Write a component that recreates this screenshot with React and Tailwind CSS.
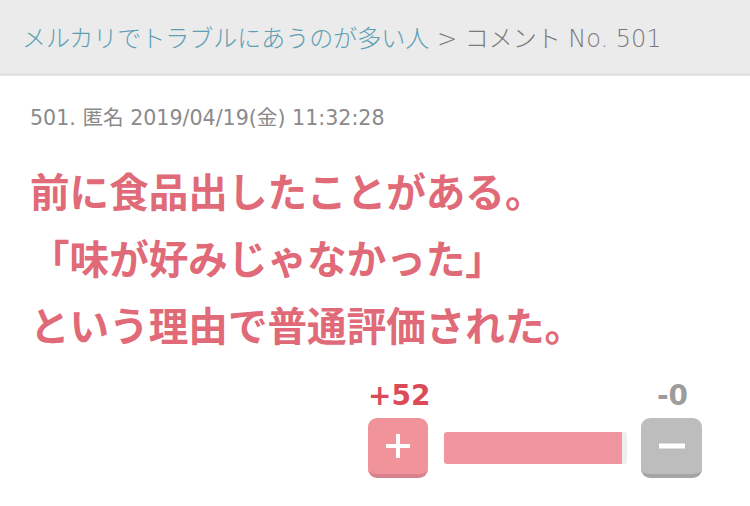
export default function App() {
  const jp = { fontFamily: '"Noto Sans CJK JP", "Noto Sans", sans-serif' };
  return (
    <div className="w-[750px] h-[506px] bg-white overflow-hidden" style={jp}>
      <div className="h-[76px] bg-[#ebebeb] border-b-[3px] border-[#e2e2e2] flex items-center pl-[22px] pt-[2px]">
        <div className="text-[24px] font-light whitespace-nowrap" style={{ fontFamily: '"Noto Sans CJK JP", sans-serif' }}>
          <span className="text-[#5e9fb3]">メルカリでトラブルにあうのが多い人</span>
          <span className="text-[#7a7a7a] font-extralight" style={{ fontFamily: '"DejaVu Sans", "Noto Sans CJK JP", sans-serif' }}> &gt; コメント No. 501</span>
        </div>
      </div>
      <div className="pl-[30px] pt-[30px]">
        <div className="text-[20.6px] leading-[24px] text-[#8a8a8a] whitespace-nowrap" style={{ fontFamily: '"DejaVu Sans", "Noto Sans CJK JP", sans-serif' }}>
          501. 匿名 2019/04/19(金) 11:32:28
        </div>
        <div className="mt-[26px] text-[39.6px] leading-[67px] font-bold text-[#e06a77] whitespace-nowrap">
          <div>前に食品出したことがある。</div>
          <div>「味が好みじゃなかった」</div>
          <div>という理由で普通評価された。</div>
        </div>
      </div>
      <div className="flex justify-end pr-[48px] mt-[21px]">
        <div className="flex flex-col w-[334px]">
          <div className="flex justify-between h-[30px] items-end text-[28px] font-bold leading-none" style={{ fontFamily: '"DejaVu Sans", sans-serif' }}>
            <span className="text-[#dd4a57] translate-y-[2px]">+52</span>
            <span className="text-[#9c9c9c] pr-[14px] translate-y-[2px]">-0</span>
          </div>
          <div className="flex items-center mt-[10px]">
            <div className="w-[60px] h-[60px] rounded-[9px] bg-[#f0939b] border-b-[4px] border-[#d8838b] flex items-center justify-center">
              <svg width="30" height="30" viewBox="0 0 30 30">
                <path d="M15 3v24M3 15h24" stroke="white" strokeWidth="4" />
              </svg>
            </div>
            <div className="ml-[16px] w-[183px] h-[32px] flex rounded-[3px] overflow-hidden">
              <div className="flex-1 bg-[#f0959f]" />
              <div className="w-[5px] bg-[#eeeeee]" />
            </div>
            <div className="ml-auto w-[61px] h-[60px] rounded-[9px] bg-[#bdbdbd] border-b-[4px] border-[#a5a5a5] flex items-center justify-center">
              <svg width="30" height="30" viewBox="0 0 30 30">
                <path d="M2 15h26" stroke="white" strokeWidth="5" />
              </svg>
            </div>
          </div>
        </div>
      </div>
    </div>
  );
}
